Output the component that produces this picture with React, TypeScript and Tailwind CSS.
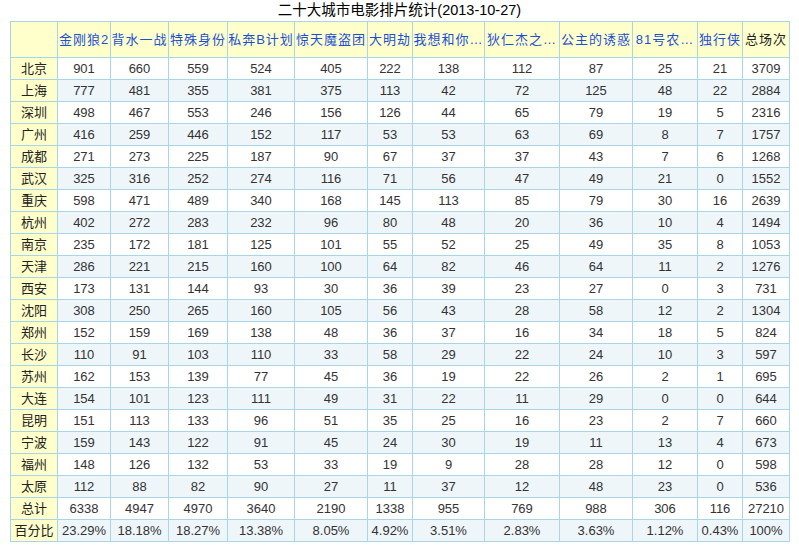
const HEADERS = [
  '金刚狼2',
  '背水一战',
  '特殊身份',
  '私奔B计划',
  '惊天魔盗团',
  '大明劫',
  '我想和你…',
  '狄仁杰之…',
  '公主的诱惑',
  '81号农…',
  '独行侠',
];

// column widths (px), first is city column, last is 总场次
const WIDTHS = [47, 53, 58, 59, 67, 73, 45, 72, 75, 73, 65, 45, 47];

const ROWS: [string, ...(string | number)[]][] = [
  ['北京', 901, 660, 559, 524, 405, 222, 138, 112, 87, 25, 21, 3709],
  ['上海', 777, 481, 355, 381, 375, 113, 42, 72, 125, 48, 22, 2884],
  ['深圳', 498, 467, 553, 246, 156, 126, 44, 65, 79, 19, 5, 2316],
  ['广州', 416, 259, 446, 152, 117, 53, 53, 63, 69, 8, 7, 1757],
  ['成都', 271, 273, 225, 187, 90, 67, 37, 37, 43, 7, 6, 1268],
  ['武汉', 325, 316, 252, 274, 116, 71, 56, 47, 49, 21, 0, 1552],
  ['重庆', 598, 471, 489, 340, 168, 145, 113, 85, 79, 30, 16, 2639],
  ['杭州', 402, 272, 283, 232, 96, 80, 48, 20, 36, 10, 4, 1494],
  ['南京', 235, 172, 181, 125, 101, 55, 52, 25, 49, 35, 8, 1053],
  ['天津', 286, 221, 215, 160, 100, 64, 82, 46, 64, 11, 2, 1276],
  ['西安', 173, 131, 144, 93, 30, 36, 39, 23, 27, 0, 3, 731],
  ['沈阳', 308, 250, 265, 160, 105, 56, 43, 28, 58, 12, 2, 1304],
  ['郑州', 152, 159, 169, 138, 48, 36, 37, 16, 34, 18, 5, 824],
  ['长沙', 110, 91, 103, 110, 33, 58, 29, 22, 24, 10, 3, 597],
  ['苏州', 162, 153, 139, 77, 45, 36, 19, 22, 26, 2, 1, 695],
  ['大连', 154, 101, 123, 111, 49, 31, 22, 11, 29, 0, 0, 644],
  ['昆明', 151, 113, 133, 96, 51, 35, 25, 16, 23, 2, 7, 660],
  ['宁波', 159, 143, 122, 91, 45, 24, 30, 19, 11, 13, 4, 673],
  ['福州', 148, 126, 132, 53, 33, 19, 9, 28, 28, 12, 0, 598],
  ['太原', 112, 88, 82, 90, 27, 11, 37, 12, 48, 23, 0, 536],
  ['总计', 6338, 4947, 4970, 3640, 2190, 1338, 955, 769, 988, 306, 116, 27210],
  ['百分比', '23.29%', '18.18%', '18.27%', '13.38%', '8.05%', '4.92%', '3.51%', '2.83%', '3.63%', '1.12%', '0.43%', '100%'],
];

export default function App() {
  return (
    <div className="w-[799px] h-[554px] bg-white font-['Liberation_Sans','Noto_Sans_CJK_SC',sans-serif] overflow-hidden">
      {/* ── Title ── */}
      <div className="h-[21px] pt-[1px] text-center text-[14.5px] leading-[19px] text-black">
        二十大城市电影排片统计(2013-10-27)
      </div>

      {/* ── Stats table ── */}
      <table className="ml-[10px] w-[780px] table-fixed border-collapse border border-[#a7d7e6]">
        <colgroup>
          {WIDTHS.map((w, i) => (
            <col key={i} style={{ width: `${w}px` }} />
          ))}
        </colgroup>
        <thead>
          <tr className="h-[36px] bg-[#ffffcc]">
            <th className="border border-[#a7d7e6] p-0" />
            {HEADERS.map(h => (
              <th
                key={h}
                className="border border-[#a7d7e6] p-0 text-[13px] font-normal tracking-[1px] text-[#1c4fd8] whitespace-nowrap overflow-hidden"
              >
                {h}
              </th>
            ))}
            <th className="border border-[#a7d7e6] p-0 text-[13px] font-normal tracking-[1px] text-[#222] whitespace-nowrap">
              总场次
            </th>
          </tr>
        </thead>
        <tbody>
          {ROWS.map(([city, ...vals], r) => (
            <tr key={city} className={`h-[22px] ${r % 2 === 1 ? 'bg-[#eef6fa]' : 'bg-white'}`}>
              <td className="border border-[#a7d7e6] bg-[#ffffcc] p-0 text-center text-[13px] leading-[20px] text-[#222]">
                {city}
              </td>
              {vals.map((v, i) => (
                <td
                  key={i}
                  className="border border-[#a7d7e6] p-0 text-center text-[13px] leading-[20px] text-[#333]"
                >
                  {v}
                </td>
              ))}
            </tr>
          ))}
        </tbody>
      </table>
    </div>
  );
}
